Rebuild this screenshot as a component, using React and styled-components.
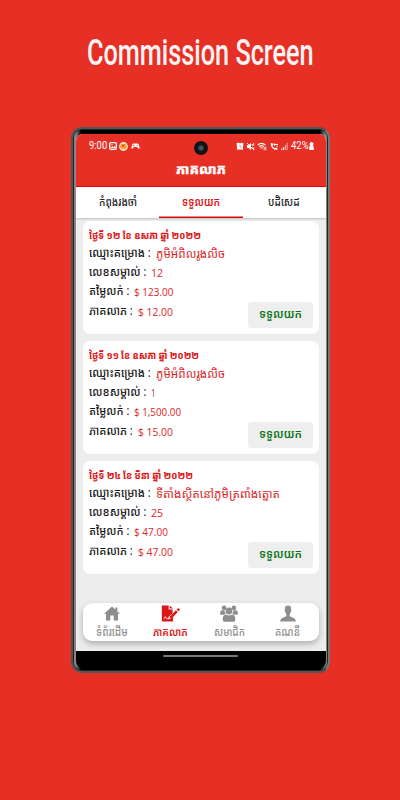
import { useLayoutEffect, useRef, useState } from "react";
import styled, { createGlobalStyle, css } from "styled-components";

const CARDS = [
    {
        date: "ថ្ងៃទី ១២ ខែ ឧសភា ឆ្នាំ ២០២២",
        dateWidth: 112,
        project: "ភូមិអំពិលរូងលិច",
        projectWidth: 69,
        number: "12",
        price: "$ 123.00",
        priceWidth: 39,
        commission: "$ 12.00"
    },
    {
        date: "ថ្ងៃទី ១១ ខែ ឧសភា ឆ្នាំ ២០២២",
        dateWidth: 110,
        project: "ភូមិអំពិលរូងលិច",
        projectWidth: 69,
        number: "1",
        price: "$ 1,500.00",
        priceWidth: 47,
        commission: "$ 15.00"
    },
    {
        date: "ថ្ងៃទី ២៤ ខែ មីនា ឆ្នាំ ២០២២",
        dateWidth: 104,
        project: "ទីតាំងស្ថិតនៅភូមិត្រពាំងត្នោត",
        projectWidth: 124,
        number: "25",
        price: "$ 47.00",
        priceWidth: 34,
        commission: "$ 47.00"
    }
];

// squeezes or stretches a line of text to a fixed width
function FitText ( { width, children } ) {
    const ref = useRef( null );
    const [ scale, setScale ] = useState( 1 );

    useLayoutEffect( () => {
        const measure = () => setScale( width / ref.current.offsetWidth );
        measure();
        document.fonts.ready.then( measure );
    }, [ width, children ] );

    return (
        <FitBox $width={ width }>
            <FitInner ref={ ref } style={ { transform: `scaleX(${ scale })` } }>{ children }</FitInner>
        </FitBox>
    );
}

function StatusIcons () {
    return (
        <StatusGroup>
            <FitText width={ 18 }>9:00</FitText>
            <svg width="8" height="8" viewBox="0 0 8 8">
                <rect x=".7" y=".7" width="6.6" height="6.6" rx="1" fill="none" stroke="#fff" strokeWidth="1.3" />
                <path d="M1.5 6 3.2 4l1.2 1.2L5.5 4 7 6.2z" fill="#fff" />
                <circle cx="3" cy="2.6" r=".7" fill="#fff" />
            </svg>
            <svg width="9" height="9" viewBox="0 0 9 9">
                <circle cx="4.5" cy="4.5" r="4.4" fill="#fff0e0" />
                <path d="M1 4a3.5 3.5 0 0 0 7 0L6.5 1.3 4.5 2.4 2.5 1.3z" fill="#f9a93a" />
                <circle cx="4.3" cy="3.7" r="1.4" fill="#ec5324" />
            </svg>
            <svg width="9" height="8" viewBox="0 0 9 8">
                <path d="M2.2 1.5h4.6c1.1 0 1.7 3 1.8 4.5.1 1.3-1.2 1.1-2.6-.9H3C1.6 7.1.3 7.3.4 6 .5 4.5 1.1 1.5 2.2 1.5z" fill="#fff" />
                <path d="M2 3.4h1.6M2.8 2.6v1.6M5.6 3.4h1.5" stroke="#e63026" strokeWidth=".6" />
            </svg>
        </StatusGroup>
    );
}

function SignalIcons () {
    return (
        <StatusGroup>
            <svg width="8" height="9" viewBox="0 0 8 9">
                <path d="M.7 2.5V1l1.8-.2 1.5.5L5.5.8 7.3 1v1.5l-.4 4.3.3 1.2-1.4-.4H2.2L.8 8l.3-1.2z" fill="#fff" />
                <path d="M4 2.8v2l1.2.8" fill="none" stroke="#e63026" strokeWidth=".6" />
            </svg>
            <svg width="9" height="9" viewBox="0 0 9 9">
                <path d="M1 3h1.6L5 1v7L2.6 6H1z" fill="#fff" />
                <path d="m1 1 7 7M6.2 2v1.8M7.7 1v2.8M6.2 5v2M7.7 5.5V8" stroke="#fff" strokeWidth=".9" />
            </svg>
            <svg width="10" height="9" viewBox="0 0 10 9">
                <path d="M.7 3Q4.5-.3 8.5 3M2.2 4.6q2.3-2 4.6 0M3.5 6.2q1-.8 2 0" fill="none" stroke="#fff" strokeWidth="1.1" />
                <path d="M7.2 4.8v3.4M8.8 4.8v3.4" stroke="#fff" strokeWidth=".9" />
            </svg>
            <svg width="9" height="9" viewBox="0 0 9 9">
                <path d="M.8 1.2 2.5 1l.7 2-.8.8q.7 1.7 2.3 2.4l.9-.8 2 .8-.4 1.5C3.2 8.3.4 4.6.8 1.2z" fill="#fff" />
                <path d="M4 2.5h4M4.8 1.3 3.8 2.5l1.2 1.2M6.5 4.2H8" fill="none" stroke="#fff" strokeWidth="1" />
            </svg>
            <svg width="7" height="9" viewBox="0 0 7 9">
                <path d="M.8 6.5V8M2.6 5v3" stroke="#fff" strokeWidth="1" />
                <path d="M4.4 3v5M6.2 1v7" stroke="#fff" strokeWidth="1" opacity=".65" />
            </svg>
            <BatteryGroup>
                <FitText width={ 18 }>42%</FitText>
                <svg width="5" height="8" viewBox="0 0 5 8">
                    <path d="M1.5 0h2v1H4.4v2L3.8 4l1 1v3H.2V5l1-1-.6-1V1h.9z" fill="#fff" />
                </svg>
            </BatteryGroup>
        </StatusGroup>
    );
}

function HomeIcon () {
    return (
        <svg width="16" height="14" viewBox="0 0 16 14">
            <path d="M8 0 0 7.3h2V14h4.3V9h3.4v5H14V7.3h2l-2.6-2.4V1h-2v2.1z" fill="currentColor" />
        </svg>
    );
}

function ContractIcon () {
    return (
        <svg width="20" height="18" viewBox="0 0 20 18">
            <path d="M.3.5h7.2v4.2h4.2v4L7.5 12.4l-.7 2.7 3-.6 2.4-2.3v5.2H.3z" fill="currentColor" />
            <path d="M8.6.4 12 3.8H8.6z" fill="currentColor" />
            <path d="m8.8 12.2 6.4-6.6 2 1.9-6.4 6.4-2.5.5zM16 4.8l1.2-1.2q.7-.5 1.3.1l.6.6q.5.6 0 1.2L17.9 6.7z" fill="currentColor" />
            <path d="M2.2 14.5q1.1-.2 1.8-2.2l1.2 2.2h2" fill="none" stroke="#fff" strokeWidth=".9" />
        </svg>
    );
}

function MembersIcon () {
    return (
        <svg width="18" height="17" viewBox="0 0 18 17" fill="currentColor">
            <circle cx="4.1" cy="2.9" r="2.3" />
            <circle cx="13.9" cy="2.9" r="2.3" />
            <path d="M.2 9.3V7q.2-1.7 2-1.7h2.2q.1 2.1 1.4 3.2-1.2.3-1.9 1.2H.6zM17.8 9.3V7q-.2-1.7-2-1.7h-2.2q-.1 2.1-1.4 3.2 1.2.3 1.9 1.2h3.3z" />
            <circle cx="9" cy="6" r="3.4" />
            <path d="M2.8 15.3v-2.1q.3-3.4 3.2-3.6 3 1.8 6 0 2.9.2 3.2 3.6v2.1q-.2 1.5-1.8 1.5H4.6q-1.6 0-1.8-1.5z" />
        </svg>
    );
}

function AccountIcon () {
    return (
        <svg width="16" height="16" viewBox="0 0 16 16">
            <path d="M8 0c2.5 0 3.3 1.7 3.1 3.7l.3 1.2-.6 1.3q-.3 1.6-1.2 2.4v1.3q.4 1.3 3 2.1 3.1 1 3.2 4H.2q.1-3 3.2-4 2.6-.8 3-2.1V8.6q-.9-.8-1.2-2.4l-.6-1.3.3-1.2C4.7 1.7 5.5 0 8 0z" fill="currentColor" />
        </svg>
    );
}

function Detail ( { label, labelWidth, children } ) {
    return (
        <DetailRow>
            <Label><FitText width={ labelWidth }>{ label }</FitText></Label>
            <Value>{ children }</Value>
        </DetailRow>
    );
}

function CommissionCard ( { item } ) {
    return (
        <Card>
            <CardDate><FitText width={ item.dateWidth }>{ item.date }</FitText></CardDate>
            <Detail label="ឈ្មោះគម្រោង :" labelWidth={ 62 }>
                <FitText width={ item.projectWidth }>{ item.project }</FitText>
            </Detail>
            <Detail label="លេខសម្គាល់ :" labelWidth={ 57 }>
                <FitText width={ item.number.length > 1 ? 12 : 5 }>{ item.number }</FitText>
            </Detail>
            <Detail label="តម្លៃលក់ :" labelWidth={ 40 }>
                <FitText width={ item.priceWidth }>{ item.price }</FitText>
            </Detail>
            <Detail label="ភាគលាភ :" labelWidth={ 44 }>
                <FitText width={ 35 }>{ item.commission }</FitText>
            </Detail>
            <ReceiveButton><FitText width={ 43 }>ទទួលយក</FitText></ReceiveButton>
        </Card>
    );
}

function App () {
    return (
        <Page>
            <GlobalStyle />
            <Title><FitText width={ 227 }>Commission Screen</FitText></Title>
            <Phone>
                <Camera />
                <Screen>
                    <Header>
                        <StatusBar>
                            <StatusIcons />
                            <SignalIcons />
                        </StatusBar>
                        <Heading><FitText width={ 50 }>ភាគលាភ</FitText></Heading>
                    </Header>
                    <Tabs>
                        <Tab><FitText width={ 38 }>កំពុងរងចាំ</FitText></Tab>
                        <Tab $active><FitText width={ 38 }>ទទួលយក</FitText></Tab>
                        <Tab><FitText width={ 32 }>បដិសេដ</FitText></Tab>
                    </Tabs>
                    <List>
                        { CARDS.map( ( item ) => (
                            <CommissionCard item={ item } key={ item.date } />
                        ) ) }
                    </List>
                    <Nav>
                        <NavItem><HomeIcon /><FitText width={ 32 }>ទំព័រដើម</FitText></NavItem>
                        <NavItem $active><ContractIcon /><FitText width={ 35 }>ភាគលាភ</FitText></NavItem>
                        <NavItem><MembersIcon /><FitText width={ 31 }>សមាជិក</FitText></NavItem>
                        <NavItem><AccountIcon /><FitText width={ 25 }>គណនី</FitText></NavItem>
                    </Nav>
                </Screen>
                <Chin><HomeBar /></Chin>
            </Phone>
        </Page>
    );
}

const GlobalStyle = createGlobalStyle`
  * {
    box-sizing: border-box;
  }
  body {
    margin: 0;
    font-family: "Open Sans", "Khmer OS Battambang", "Noto Sans Khmer", "Noto Sans", sans-serif;
  }
`;

const Page = styled.main`
  width: 400px;
  height: 800px;
  overflow: hidden;
  background: #e63026;
  display: flex;
  flex-direction: column;
  align-items: center;
`;

const FitBox = styled.span`
  display: block;
  flex: none;
  width: ${ ( p ) => p.$width }px;
`;

const FitInner = styled.span`
  display: inline-block;
  white-space: nowrap;
  transform-origin: 0 50%;
`;

const Title = styled.h1`
  margin: 0;
  height: 127px;
  padding-top: 31px;
  font: 500 36.5px/44px Roboto, sans-serif;
  color: #fff4f4;
`;

const Phone = styled.div`
  position: relative;
  width: 259px;
  height: 546px;
  margin-left: 1px;
  padding: 5px 2px 2px 3px;
  border: 2px solid #515554;
  border-right-color: #737978;
  border-radius: 11px;
  background: linear-gradient(90deg, #858887 0 3px, #000 8px 247px, #858887 252px);
  box-shadow: inset 0 0 0 1px #202323;
`;

const Camera = styled.span`
  position: absolute;
  z-index: 1;
  top: 12px;
  left: 121px;
  width: 14px;
  height: 14px;
  border-radius: 50%;
  border: 4px solid #111416;
  background: radial-gradient(#53606b, #1c242b);
`;

const Screen = styled.div`
  height: 517px;
  overflow: hidden;
  border-radius: 7px 7px 0 0;
  background: #ededed;
  display: flex;
  flex-direction: column;
`;

const Header = styled.header`
  height: 53px;
  flex: none;
  background: #e63026;
  border-bottom: 1px solid #df0a08;
  color: #fff;
`;

const StatusBar = styled.div`
  display: flex;
  justify-content: space-between;
  height: 24px;
  padding: 0 12px 0 13px;
  font: 400 10px/14px Roboto, sans-serif;
`;

const StatusGroup = styled.div`
  display: flex;
  align-items: center;
  gap: 2.2px;
`;

const BatteryGroup = styled.div`
  display: flex;
  align-items: center;
  gap: 0;
  padding-left: 1px;
`;

const Heading = styled.h2`
  margin: 0;
  display: flex;
  justify-content: center;
  font-size: 13px;
  line-height: 23px;
  font-weight: 800;
  -webkit-text-stroke: .3px;
`;

const Tabs = styled.div`
  display: grid;
  grid-template-columns: repeat(3, 1fr);
  height: 31px;
  flex: none;
  background: #fff;
  box-shadow: 0 1px 2px #0003;
`;

const Tab = styled.div`
  display: flex;
  justify-content: center;
  font-size: 11.5px;
  line-height: 29px;
  color: #222;
  font-weight: 500;
  ${ ( p ) => p.$active && css`
    color: #dd0c0c;
    font-weight: 600;
    box-shadow: inset 0 -1.5px #dd0c0c;
  ` }
`;

const List = styled.div`
  display: flex;
  flex-direction: column;
  gap: 7px;
  padding: 3px 7px 0;
`;

const Card = styled.article`
  position: relative;
  height: 113px;
  padding: 5px 6px;
  border-radius: 7px;
  background: #fff;
`;

const CardDate = styled.div`
  height: 18px;
  font-size: 10.5px;
  line-height: 19px;
  font-weight: 800;
  color: #dd1515;
`;

const DetailRow = styled.div`
  display: flex;
  gap: 5px;
  height: 19.2px;
  font-size: 12.5px;
  line-height: 18px;
`;

const Label = styled.span`
  color: #111;
  font-weight: 500;
`;

const Value = styled.span`
  color: #dc2626;
  font-size: 11.5px;
  line-height: 20px;
`;

const ReceiveButton = styled.button`
  position: absolute;
  right: 6px;
  bottom: 6px;
  width: 65px;
  height: 26px;
  padding: 0 0 3px;
  display: flex;
  align-items: center;
  justify-content: center;
  border: 0;
  border-radius: 3px;
  background: #eee;
  color: #087512;
  font: inherit;
  font-size: 12.5px;
  font-weight: 600;
`;

const Nav = styled.nav`
  display: grid;
  grid-template-columns: repeat(4, 1fr);
  height: 38px;
  margin: auto 7px 10px;
  padding-right: 2px;
  border-radius: 9px;
  background: #fff;
  box-shadow: 0 3px 6px #0004;
`;

const NavItem = styled.div`
  display: flex;
  flex-direction: column;
  align-items: center;
  font-size: 11px;
  line-height: 18px;
  color: ${ ( p ) => ( p.$active ? "#dd1515" : "#8e8e8e" ) };
  font-weight: ${ ( p ) => ( p.$active ? 600 : 500 ) };
  svg {
    height: 17px;
    margin: 2px 0 1px;
    flex: none;
  }
`;

const Chin = styled.div`
  display: flex;
  justify-content: center;
  height: 18px;
  padding: 4px 2px 0 0;
  background: #000;
  border-radius: 0 0 8px 8px;
`;

const HomeBar = styled.span`
  width: 75px;
  height: 2px;
  border-radius: 1px;
  background: #777;
`;

export default App;
